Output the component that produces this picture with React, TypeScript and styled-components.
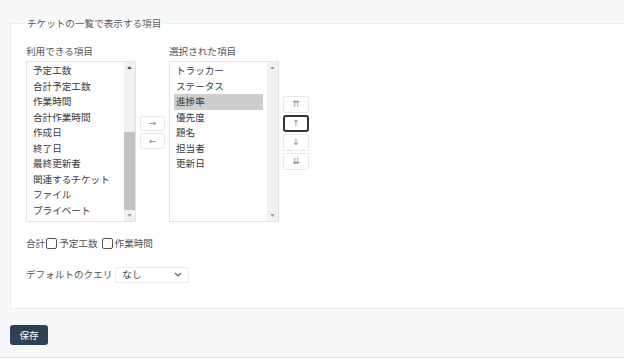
import React from 'react';
import styled, { createGlobalStyle, css } from 'styled-components';

const Global = createGlobalStyle`
  html, body { margin: 0; padding: 0; }
  body {
    background: #ffffff;
    font-family: "Noto Sans CJK JP", "Noto Sans", sans-serif;
    font-size: 9.6px;
    color: #3a3a3a;
    overflow: hidden;
    width: 624px;
    height: 360px;
  }
`;

const Page = styled.div`
  box-sizing: border-box;
  height: 358px;
  background: #f7f8fa;
  border-bottom: 1px solid #dcdfe3;
  padding: 16px 0 0 10px;
  overflow: hidden;
`;

const Fieldset = styled.fieldset`
  margin: 0 -20px 0 0;
  border: 1px solid #eceef1;
  background: #ffffff;
  padding: 12px 0 25px 15px;
  min-width: 0;
`;

const Legend = styled.legend`
  padding: 0 1px;
  font-size: 9.6px;
  line-height: 15.5px;
  color: #5a5a5a;
`;

const Columns = styled.div`
  display: flex;
  align-items: center;
  gap: 4px;
`;

const Column = styled.div`
  display: flex;
  flex-direction: column;
`;

const ColLabel = styled.label`
  line-height: 15.5px;
  color: #555;
  margin-bottom: 2px;
`;

const ListBox = styled.div`
  box-sizing: border-box;
  width: 110px;
  height: 161px;
  border: 1px solid #e4e4e4;
  background: #fff;
  display: flex;
`;

const Items = styled.div`
  flex: 1;
  padding: 1px 4px 0 4px;
  overflow: hidden;
`;

const Option = styled.div<{ $selected?: boolean }>`
  padding: 0 2px;
  line-height: 15.5px;
  white-space: nowrap;
  color: #3a3a3a;
  ${(p) => p.$selected && css`background: #cdcdcd;`}
`;

const Scrollbar = styled.div`
  width: 11px;
  background: #f1f1f1;
  display: flex;
  flex-direction: column;
`;

const ScrollArrow = styled.div`
  height: 11px;
  display: flex;
  align-items: center;
  justify-content: center;
  flex: none;
`;

const Track = styled.div`
  flex: 1;
  display: flex;
  flex-direction: column;
  justify-content: flex-end;
`;

const Thumb = styled.div`
  height: 78px;
  background: #c1c1c1;
`;

const ButtonStack = styled.div<{ $gap: number }>`
  display: flex;
  flex-direction: column;
  gap: ${(p) => p.$gap}px;
`;

const MoveButton = styled.button<{ $w: number; $h: number; $focused?: boolean }>`
  box-sizing: border-box;
  width: ${(p) => p.$w}px;
  height: ${(p) => p.$h}px;
  padding: 0;
  border: 1px solid #e8e8e8;
  border-radius: 2px;
  background: #fff;
  color: #888;
  font-family: "DejaVu Sans", "Noto Sans CJK JP", sans-serif;
  font-size: 9px;
  line-height: 1;
  display: flex;
  align-items: center;
  justify-content: center;
  ${(p) =>
    p.$focused &&
    css`
      border: 2px solid #333;
      border-radius: 3px;
    `}
`;

const TotalsRow = styled.div`
  margin-top: 14px;
  display: flex;
  align-items: center;
  line-height: 15.5px;
  color: #555;
`;

const Check = styled.input`
  appearance: none;
  box-sizing: border-box;
  width: 11px;
  height: 11px;
  margin: 0 2px 0 1px;
  border: 1px solid #555;
  border-radius: 2px;
  background: #fff;
`;

const CheckLabel = styled.label`
  display: inline-flex;
  align-items: center;
  margin-right: 3px;
`;

const QueryRow = styled.div`
  margin-top: 15px;
  display: flex;
  align-items: center;
  gap: 3px;
  color: #555;
  line-height: 15.5px;
`;

const FakeSelect = styled.div`
  box-sizing: border-box;
  width: 74px;
  height: 16px;
  border: 1px solid #ececec;
  border-radius: 2px;
  background: #fff;
  padding: 0 6px;
  display: flex;
  align-items: center;
  justify-content: space-between;
  color: #3a3a3a;
`;

const SaveButton = styled.button`
  margin-top: 16px;
  width: 38px;
  height: 20px;
  padding: 0;
  border: none;
  border-radius: 3px;
  background: #2d4154;
  color: #fff;
  font-family: "Noto Sans CJK JP", sans-serif;
  font-size: 9.6px;
`;

const Tri = ({ up, dark }: { up?: boolean; dark?: boolean }) => (
  <svg width="5" height="3" viewBox="0 0 6 4">
    <path d={up ? 'M0 4 L3 0 L6 4 Z' : 'M0 0 L3 4 L6 0 Z'} fill={dark ? '#505050' : '#a3a3a3'} />
  </svg>
);

const Chevron = () => (
  <svg width="8" height="5" viewBox="0 0 8 5">
    <path d="M1 1 L4 4 L7 1" fill="none" stroke="#555" strokeWidth="1.1" />
  </svg>
);

const available = ['予定工数', '合計予定工数', '作業時間', '合計作業時間', '作成日', '終了日', '最終更新者', '関連するチケット', 'ファイル', 'プライベート'];
const selected = ['トラッカー', 'ステータス', '進捗率', '優先度', '題名', '担当者', '更新日'];

export default function App() {
  return (
    <>
      <Global />
      <Page>
        <Fieldset>
          <Legend>チケットの一覧で表示する項目</Legend>
          <Columns>
            <Column>
              <ColLabel>利用できる項目</ColLabel>
              <ListBox>
                <Items>
                  {available.map((a) => (
                    <Option key={a}>{a}</Option>
                  ))}
                </Items>
                <Scrollbar>
                  <ScrollArrow><Tri up dark /></ScrollArrow>
                  <Track>
                    <Thumb />
                  </Track>
                  <ScrollArrow><Tri /></ScrollArrow>
                </Scrollbar>
              </ListBox>
            </Column>
            <ButtonStack $gap={2}>
              <MoveButton $w={25} $h={15}>→</MoveButton>
              <MoveButton $w={25} $h={16}>←</MoveButton>
            </ButtonStack>
            <Column>
              <ColLabel>選択された項目</ColLabel>
              <ListBox>
                <Items>
                  {selected.map((s) => (
                    <Option key={s} $selected={s === '進捗率'}>{s}</Option>
                  ))}
                </Items>
                <Scrollbar>
                  <ScrollArrow><Tri up /></ScrollArrow>
                  <Track />
                  <ScrollArrow><Tri /></ScrollArrow>
                </Scrollbar>
              </ListBox>
            </Column>
            <ButtonStack $gap={2}>
              <MoveButton $w={26} $h={17}>⇈</MoveButton>
              <MoveButton $w={26} $h={17} $focused>↑</MoveButton>
              <MoveButton $w={26} $h={17}>↓</MoveButton>
              <MoveButton $w={26} $h={17}>⇊</MoveButton>
            </ButtonStack>
          </Columns>
          <TotalsRow>
            合計
            <CheckLabel><Check type="checkbox" />予定工数</CheckLabel>
            <CheckLabel><Check type="checkbox" />作業時間</CheckLabel>
          </TotalsRow>
          <QueryRow>
            デフォルトのクエリ
            <FakeSelect>
              なし
              <Chevron />
            </FakeSelect>
          </QueryRow>
        </Fieldset>
        <SaveButton>保存</SaveButton>
      </Page>
    </>
  );
}
